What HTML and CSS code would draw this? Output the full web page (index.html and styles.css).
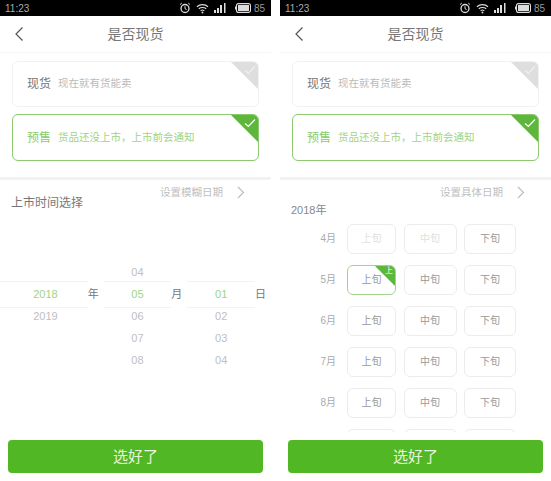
FILE: index.html
```html
<!DOCTYPE html>
<html lang="zh-CN">

<head>
  <meta charset="UTF-8" />
  <meta name="viewport" content="width=device-width, initial-scale=1.0" />
  <title>是否现货</title>
  <link rel="stylesheet" href="styles.css">
</head>

<body>
  <!-- Left screen: fuzzy date wheel -->
  <div class="screen">
    <div class="status">
      <span class="time">11:23</span>
      <div class="status-icons">
        <svg width="12" height="12" viewBox="0 0 12 12"><circle cx="6" cy="6.5" r="4" fill="none" stroke="#ddd" stroke-width="1.3"/><path d="M6 4.2V6.6L7.6 7.6" fill="none" stroke="#ddd"/><path d="M1 2.6 2.8 1M11 2.6 9.2 1" stroke="#ddd"/></svg>
        <svg width="13" height="11" viewBox="0 0 14 11"><path d="M1 3.6C4.4.6 9.6.6 13 3.6M3 5.8C5.2 3.9 8.8 3.9 11 5.8M5 8C6.2 7 7.8 7 9 8" fill="none" stroke="#ddd" stroke-width="1.2"/><circle cx="7" cy="9.8" r="1" fill="#ddd"/></svg>
        <svg class="signal" width="12" height="10" viewBox="0 0 12 10"><path d="M0 7h2v3H0zM3 5h2v5H3zM6 2h2v8H6zM10 0h1.500v10H10z" fill="#ddd"/></svg>
        <svg width="16" height="10" viewBox="0 0 16 10"><rect x="1.500" y=".6" width="14" height="8.800" rx="2" fill="none" stroke="#ddd" stroke-width="1.100"/><rect x="3" y="2" width="11" height="6" fill="#ddd"/><rect y="3.500" width="1" height="3" fill="#ddd"/></svg>
        <span class="battery">85</span>
      </div>
    </div>
    <div class="nav">
      <svg class="back" width="10" height="16" viewBox="0 0 10 16"><path d="M8.500 1.500 2 8l6.500 6.500" fill="none" stroke="#555" stroke-width="1.200"/></svg>
      <span>是否现货</span>
    </div>
    <div class="options">
      <div class="option">
        <b>现货</b><span>现在就有货能卖</span>
        <div class="corner"></div>
        <svg class="tick" width="12" height="10" viewBox="0 0 12 10"><path d="M1 5.500 4.300 8.500 11 1.500" fill="none" stroke="#f0f0f0" stroke-width="1.200"/></svg>
      </div>
      <div class="option on">
        <b>预售</b><span>货品还没上市，上市前会通知</span>
        <div class="corner"></div>
        <svg class="tick" width="12" height="10" viewBox="0 0 12 10"><path d="M1 5.500 4.300 8.500 11 1.500" fill="none" stroke="#fff" stroke-width="1.200"/></svg>
      </div>
    </div>
    <div class="main">
      <div class="head">
        <div class="head-title">上市时间选择</div>
        <div class="switch">设置模糊日期
          <svg width="8" height="13" viewBox="0 0 8 13"><path d="M1 1l5.500 5.500L1 12" fill="none" stroke="#bbb" stroke-width="1.100"/></svg>
        </div>
      </div>
      <div class="wheels">
        <div class="wheel w-year">
          <div></div><div class="cur">2018</div><div>2019</div><div></div><div></div>
        </div>
        <div class="unit">年</div>
        <div class="wheel w-part">
          <div>04</div><div class="cur">05</div><div>06</div><div>07</div><div>08</div>
        </div>
        <div class="unit">月</div>
        <div class="wheel w-part">
          <div></div><div class="cur">01</div><div>02</div><div>03</div><div>04</div>
        </div>
        <div class="unit">日</div>
      </div>
    </div>
    <div class="foot"><button class="done">选好了</button></div>
  </div>

  <!-- Right screen: month / ten-day grid -->
  <div class="screen">
    <div class="status">
      <span class="time">11:23</span>
      <div class="status-icons">
        <svg width="12" height="12" viewBox="0 0 12 12"><circle cx="6" cy="6.5" r="4" fill="none" stroke="#ddd" stroke-width="1.3"/><path d="M6 4.2V6.6L7.6 7.6" fill="none" stroke="#ddd"/><path d="M1 2.6 2.8 1M11 2.6 9.2 1" stroke="#ddd"/></svg>
        <svg width="13" height="11" viewBox="0 0 14 11"><path d="M1 3.6C4.4.6 9.6.6 13 3.6M3 5.8C5.2 3.9 8.8 3.9 11 5.8M5 8C6.2 7 7.8 7 9 8" fill="none" stroke="#ddd" stroke-width="1.2"/><circle cx="7" cy="9.8" r="1" fill="#ddd"/></svg>
        <svg class="signal" width="12" height="10" viewBox="0 0 12 10"><path d="M0 7h2v3H0zM3 5h2v5H3zM6 2h2v8H6zM10 0h1.500v10H10z" fill="#ddd"/></svg>
        <svg width="16" height="10" viewBox="0 0 16 10"><rect x="1.500" y=".6" width="14" height="8.800" rx="2" fill="none" stroke="#ddd" stroke-width="1.100"/><rect x="3" y="2" width="11" height="6" fill="#ddd"/><rect y="3.500" width="1" height="3" fill="#ddd"/></svg>
        <span class="battery">85</span>
      </div>
    </div>
    <div class="nav">
      <svg class="back" width="10" height="16" viewBox="0 0 10 16"><path d="M8.500 1.500 2 8l6.500 6.500" fill="none" stroke="#555" stroke-width="1.200"/></svg>
      <span>是否现货</span>
    </div>
    <div class="options">
      <div class="option">
        <b>现货</b><span>现在就有货能卖</span>
        <div class="corner"></div>
        <svg class="tick" width="12" height="10" viewBox="0 0 12 10"><path d="M1 5.500 4.300 8.500 11 1.500" fill="none" stroke="#f0f0f0" stroke-width="1.200"/></svg>
      </div>
      <div class="option on">
        <b>预售</b><span>货品还没上市，上市前会通知</span>
        <div class="corner"></div>
        <svg class="tick" width="12" height="10" viewBox="0 0 12 10"><path d="M1 5.500 4.300 8.500 11 1.500" fill="none" stroke="#fff" stroke-width="1.200"/></svg>
      </div>
    </div>
    <div class="main">
      <div class="head">
        <div class="switch">设置具体日期
          <svg width="8" height="13" viewBox="0 0 8 13"><path d="M1 1l5.500 5.500L1 12" fill="none" stroke="#bbb" stroke-width="1.100"/></svg>
        </div>
      </div>
      <div class="year">2018年</div>
      <div class="months">
        <div class="month">4月</div>
        <div class="cell off">上旬</div><div class="cell off">中旬</div><div class="cell">下旬</div>
        <div class="month">5月</div>
        <div class="cell picked">上旬<i></i><em>上</em></div><div class="cell">中旬</div><div class="cell">下旬</div>
        <div class="month">6月</div>
        <div class="cell">上旬</div><div class="cell">中旬</div><div class="cell">下旬</div>
        <div class="month">7月</div>
        <div class="cell">上旬</div><div class="cell">中旬</div><div class="cell">下旬</div>
        <div class="month">8月</div>
        <div class="cell">上旬</div><div class="cell">中旬</div><div class="cell">下旬</div>
        <!-- next row is scrolled under the button, only its top edge shows -->
        <div class="month"></div>
        <div class="cell"></div><div class="cell"></div><div class="cell"></div>
      </div>
    </div>
    <div class="foot"><button class="done">选好了</button></div>
  </div>
</body>

</html>
```

FILE: styles.css
```css
* {
  box-sizing: border-box;
}

body {
  margin: 0;
  width: 551px;
  height: 481px;
  overflow: hidden;
  display: flex;
  gap: 9px;
  background-color: #fff;
  font-family: "Liberation Sans", "Noto Sans CJK SC", sans-serif;
}

.screen {
  width: 271px;
  height: 481px;
  display: flex;
  flex-direction: column;
}

.status {
  height: 16px;
  padding: 0 6px 0 5px;
  display: flex;
  align-items: center;
  justify-content: space-between;
  background-color: #000;
  color: #aaa;
  font-size: 10px;
}

.status-icons {
  display: flex;
  align-items: center;
  gap: 5px;
  color: #999;
}

.signal {
  margin-right: 4px;
}

.battery {
  margin-left: -2px;
}

.nav {
  position: relative;
  height: 37px;
  flex: none;
  padding-bottom: 2px;
  display: flex;
  align-items: center;
  justify-content: center;
  border-bottom: 1px solid #f5f5f5;
  color: #777;
  font-size: 14px;
}

.back {
  position: absolute;
  left: 14px;
  top: 10px;
}

.options {
  height: 127px;
  flex: none;
  padding: 8px 12px 0;
  border-bottom: 3px solid #f2f2f2;
}

.option {
  position: relative;
  height: 46px;
  margin-bottom: 7px;
  padding: 0 0 3px 14px;
  display: flex;
  align-items: center;
  gap: 7px;
  overflow: hidden;
  border: 1px solid #f2f2f2;
  border-radius: 6px;
  color: #bbb;
  font-size: 10.500px;
}

.option b {
  font-weight: normal;
  font-size: 12px;
  color: #777;
}

.option.on {
  height: 47px;
  border-color: #8cc96f;
  color: #a0d486;
}

.option.on b {
  color: #8ccb6c;
}

.corner {
  position: absolute;
  top: 0;
  right: 0;
  width: 27px;
  height: 27px;
  background-color: #dedede;
  clip-path: polygon(0 0, 100% 0, 100% 100%);
}

.on .corner {
  background-color: #5cb73a;
}

.tick {
  position: absolute;
  top: 3px;
  right: 2px;
}

.main {
  flex: 1;
  min-height: 0;
}

.head {
  height: 20px;
  position: relative;
  padding-top: 3px;
}

.head-title {
  position: absolute;
  left: 11px;
  top: 13px;
  color: #777;
  font-size: 12px;
}

.switch {
  display: flex;
  justify-content: flex-end;
  align-items: center;
  gap: 14px;
  padding-right: 26px;
  color: #c0c0c0;
  font-size: 10.500px;
}

.switch svg {
  margin-top: 3px;
}

.wheels {
  margin-top: 61px;
  display: flex;
  align-items: flex-start;
}

.wheel {
  position: relative;
  display: grid;
  grid-auto-rows: 22px;
  color: #c0c0c0;
  font-size: 11px;
  text-align: center;
}

.wheel div {
  line-height: 22px;
}

.wheel .cur {
  color: #a0d486;
  border-top: 1px solid #f3f3f3;
  border-bottom: 1px solid #f3f3f3;
  height: 27px;
  margin: -2px 0 -3px;
  line-height: 25px;
}

.w-year {
  width: 88px;
  text-align: right;
}

.w-year div {
  padding-right: 30px;
}

.w-part {
  width: 68px;
}

.unit {
  width: 15px;
  margin-top: 22px;
  margin-right: 1px;
  line-height: 22px;
  color: #777;
  font-size: 11px;
}

.year {
  margin-top: 2px;
  padding-left: 11px;
  color: #888;
  font-size: 11px;
  line-height: 16px;
}

.months {
  height: 208px;
  margin-top: 6px;
  overflow: hidden;
  display: grid;
  grid-template-columns: 59.500px 49px 53px 52px;
  grid-auto-rows: 30px;
  column-gap: 7.500px;
  row-gap: 11px;
}

.month {
  padding-right: 3.500px;
  line-height: 30px;
  text-align: right;
  color: #aaa;
  font-size: 10px;
}

.cell {
  position: relative;
  overflow: hidden;
  border: 1px solid #ececec;
  border-radius: 6px;
  line-height: 28px;
  text-align: center;
  color: #999;
  font-size: 10px;
}

.cell.off {
  color: #e0e0e0;
}

.cell.picked {
  border-color: #a3d38c;
}

.cell i {
  position: absolute;
  top: 0;
  right: 0;
  width: 20px;
  height: 20px;
  background-color: #5cb73a;
  clip-path: polygon(0 0, 100% 0, 100% 100%);
}

.cell em {
  position: absolute;
  top: 0;
  right: 2px;
  line-height: 10px;
  font-style: normal;
  font-size: 8px;
  color: #fff;
}

.foot {
  height: 41px;
  flex: none;
  padding: 0 8px;
}

.done {
  display: block;
  width: 255px;
  height: 33px;
  padding: 0 0 3px;
  border: none;
  border-radius: 4px;
  background-color: #52b725;
  color: #e6f5dd;
  font-family: inherit;
  font-size: 15px;
}
```
